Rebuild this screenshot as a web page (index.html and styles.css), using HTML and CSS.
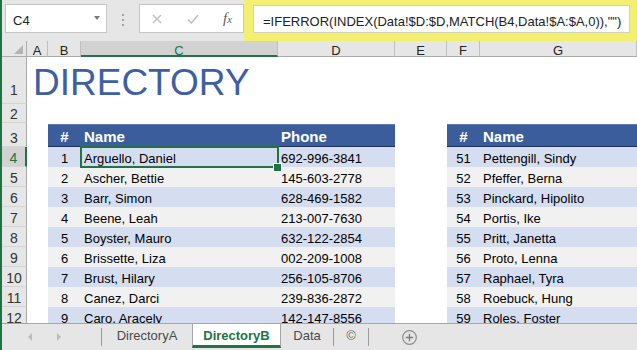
FILE: index.html
```html
<!DOCTYPE html>
<html lang="en">
<head>
  <meta charset="UTF-8">
  <title>Directory</title>
  <link rel="stylesheet" href="styles.css">
</head>
<body>
  <div class="window">
    <div class="formula-bar">
      <div class="name-box"><span>C4</span><i class="dropdown"></i></div>
      <div class="grip"><i></i><i></i><i></i></div>
      <div class="fx-box">
        <svg class="cancel" width="10" height="10" viewBox="0 0 10 10"><path d="M1 1L9 9M9 1L1 9" stroke="#bdbdbd" stroke-width="1.3" fill="none"/></svg>
        <svg class="enter" width="12" height="10" viewBox="0 0 12 10"><path d="M1 5.5L4.5 9L11 1" stroke="#bdbdbd" stroke-width="1.5" fill="none"/></svg>
        <span class="fx">f<span>x</span></span>
      </div>
      <div class="highlight">
        <div class="formula">=IFERROR(INDEX(Data!$D:$D,MATCH(B4,Data!$A:$A,0)),"")</div>
      </div>
    </div>

    <div class="sheet">
      <div class="row">
        <div class="corner"><i></i></div>
        <div class="ch">A</div><div class="ch">B</div><div class="ch active">C</div><div class="ch">D</div>
        <div class="ch">E</div><div class="ch">F</div><div class="ch">G</div>
      </div>
      <div class="row r1"><div class="rh">1</div><div class="title">DIRECTORY</div></div>
      <div class="row"><div class="rh">2</div><div class="wide"></div></div>
      <div class="row th">
        <div class="rh">3</div><div></div>
        <div class="cell num">#</div><div class="cell">Name</div><div class="cell">Phone</div>
        <div></div>
        <div class="cell num">#</div><div class="cell">Name</div>
      </div>
      <div class="row odd">
        <div class="rh active">4</div><div></div>
        <div class="cell num">1</div><div class="cell sel">Arguello, Daniel</div><div class="cell">692-996-3841</div>
        <div></div>
        <div class="cell num">51</div><div class="cell">Pettengill, Sindy</div>
      </div>
      <div class="row even">
        <div class="rh">5</div><div></div>
        <div class="cell num">2</div><div class="cell">Ascher, Bettie</div><div class="cell">145-603-2778</div>
        <div></div>
        <div class="cell num">52</div><div class="cell">Pfeffer, Berna</div>
      </div>
      <div class="row odd">
        <div class="rh">6</div><div></div>
        <div class="cell num">3</div><div class="cell">Barr, Simon</div><div class="cell">628-469-1582</div>
        <div></div>
        <div class="cell num">53</div><div class="cell">Pinckard, Hipolito</div>
      </div>
      <div class="row even">
        <div class="rh">7</div><div></div>
        <div class="cell num">4</div><div class="cell">Beene, Leah</div><div class="cell">213-007-7630</div>
        <div></div>
        <div class="cell num">54</div><div class="cell">Portis, Ike</div>
      </div>
      <div class="row odd">
        <div class="rh">8</div><div></div>
        <div class="cell num">5</div><div class="cell">Boyster, Mauro</div><div class="cell">632-122-2854</div>
        <div></div>
        <div class="cell num">55</div><div class="cell">Pritt, Janetta</div>
      </div>
      <div class="row even">
        <div class="rh">9</div><div></div>
        <div class="cell num">6</div><div class="cell">Brissette, Liza</div><div class="cell">002-209-1008</div>
        <div></div>
        <div class="cell num">56</div><div class="cell">Proto, Lenna</div>
      </div>
      <div class="row odd">
        <div class="rh">10</div><div></div>
        <div class="cell num">7</div><div class="cell">Brust, Hilary</div><div class="cell">256-105-8706</div>
        <div></div>
        <div class="cell num">57</div><div class="cell">Raphael, Tyra</div>
      </div>
      <div class="row even">
        <div class="rh">11</div><div></div>
        <div class="cell num">8</div><div class="cell">Canez, Darci</div><div class="cell">239-836-2872</div>
        <div></div>
        <div class="cell num">58</div><div class="cell">Roebuck, Hung</div>
      </div>
      <div class="row odd">
        <div class="rh">12</div><div></div>
        <div class="cell num">9</div><div class="cell">Caro, Aracely</div><div class="cell">142-147-8556</div>
        <div></div>
        <div class="cell num">59</div><div class="cell">Roles, Foster</div>
      </div>
    </div>

    <div class="tabs">
      <div class="nav"><i class="prev"></i><i class="next"></i></div>
      <i class="sep"></i>
      <div class="tab tab-a">DirectoryA</div>
      <div class="tab current">DirectoryB</div>
      <div class="tab tab-data">Data</div>
      <i class="sep"></i>
      <div class="tab tab-c">©</div>
      <i class="sep"></i>
      <svg class="add" width="15" height="15" viewBox="0 0 15 15"><circle cx="7.5" cy="7.5" r="6.8" stroke="#8c8c8c" stroke-width="1.2" fill="none"/><path d="M7.5 3.8V11.2M3.8 7.5H11.2" stroke="#7a7a7a" stroke-width="1.3"/></svg>
    </div>
  </div>
</body>
</html>
```

FILE: styles.css
```css
* {
  box-sizing: border-box;
}
body {
  margin: 0;
  font-family: "Liberation Sans", Arial, sans-serif;
  background: #fff;
}
.window {
  width: 637px;
  height: 350px;
  border-left: 2px solid #217346;
  overflow: hidden;
  display: flex;
  flex-direction: column;
}

/* formula bar */
.formula-bar {
  flex: none;
  height: 41px;
  display: flex;
  background: #e6e6e6;
}
.name-box {
  margin: 4px 0 0 3px;
  width: 102px;
  height: 29px;
  background: #fff;
  border: 1px solid #c6c6c6;
  display: flex;
  padding: 8px 0 0 7px;
  font-size: 13px;
  line-height: 15px;
  color: #222;
}
.dropdown {
  margin: 3px 6px 0 auto;
  width: 0;
  height: 0;
  border-left: 3px solid transparent;
  border-right: 3px solid transparent;
  border-top: 4px solid #7a7a7a;
}
.grip {
  width: 32px;
  display: flex;
  flex-direction: column;
  align-items: center;
  gap: 3px;
  padding-top: 14px;
}
.grip i {
  width: 2px;
  height: 2px;
  background: #a3a3a3;
}
.fx-box {
  margin-top: 4px;
  width: 105px;
  height: 29px;
  background: #fff;
  border: 1px solid #c6c6c6;
  display: flex;
  align-items: center;
  padding-left: 12px;
}
.enter {
  margin-left: 25px;
}
.fx {
  margin-left: 24px;
  font-family: "Liberation Serif", serif;
  font-style: italic;
  font-size: 15px;
  color: #5f5f5f;
}
.fx span {
  font-size: 11px;
}
.highlight {
  flex: 1;
  background: #f3ef70;
  padding: 5px 7px 0 9px;
}
.formula {
  height: 28px;
  background: #fff;
  border: 1px solid #d4d4b0;
  padding: 8px 0 0 9px;
  font-size: 13px;
  line-height: 15px;
  color: #222;
  white-space: nowrap;
}

/* grid */
.sheet {
  flex: none;
  height: 282px;
  overflow: hidden;
  display: grid;
  grid-template-columns: 25px 21px 33px 197px 117px 52px 33px 157px;
  grid-template-rows: 16px 47px 19px 24px repeat(9, 20px);
  font-size: 13px;
  color: #000;
}
.row {
  display: contents;
}
.corner {
  background: #e6e6e6;
  border-right: 1px solid #ababab;
  border-bottom: 1px solid #ababab;
  display: flex;
  justify-content: flex-end;
  align-items: flex-end;
  padding: 0 3px 2px 0;
}
.corner i {
  width: 0;
  height: 0;
  border-left: 9px solid transparent;
  border-bottom: 9px solid #b4b4b4;
}
.ch {
  background: #e6e6e6;
  border-right: 1px solid #c0c0c0;
  border-bottom: 1px solid #ababab;
  text-align: center;
  font-size: 13px;
  line-height: 13px;
  padding-top: 3px;
  color: #222;
}
.ch.active {
  background: #d2d2d2;
  border-bottom: 2px solid #217346;
  color: #217346;
}
.rh {
  background: #e6e6e6;
  border-right: 1px solid #ababab;
  border-bottom: 1px solid #d4d4d4;
  display: flex;
  justify-content: center;
  align-items: flex-end;
  font-size: 14px;
  line-height: 16px;
  color: #333;
}
.r1 .rh {
  padding-bottom: 5px;
}
.rh.active {
  background: #d2d2d2;
  border-right: 2px solid #217346;
  color: #217346;
}
.title {
  grid-column: 2 / -1;
  display: flex;
  align-items: flex-end;
  padding: 0 0 3px 6px;
  font-size: 37px;
  line-height: 37px;
  color: #3e60a3;
}
.wide {
  grid-column: 2 / -1;
}
.cell {
  display: flex;
  align-items: flex-end;
  padding: 0 0 1px 3px;
  line-height: 15px;
  white-space: nowrap;
}
.cell.num {
  justify-content: center;
  padding-left: 0;
}
.th .cell {
  margin-top: 1px;
  background: #3c5d9c;
  border-top: 1px solid #5b79b2;
  border-bottom: 1px solid #1f3158;
  color: #fff;
  font-weight: bold;
  font-size: 15px;
  line-height: 17px;
  padding-bottom: 1px;
}
.odd .cell {
  background: #d5def0;
}
.even .cell {
  background: #f1f1f1;
}
.cell.sel {
  position: relative;
  z-index: 1;
  outline: 2px solid #217346;
  outline-offset: -1px;
}
.cell.sel::after {
  content: "";
  position: absolute;
  right: -4px;
  bottom: -5px;
  width: 7px;
  height: 7px;
  background: #217346;
  border: 1px solid #fff;
}

/* sheet tabs */
.tabs {
  flex: none;
  height: 27px;
  display: flex;
  align-items: center;
  background: #e6e6e6;
  border-top: 1px solid #a6a6a6;
  font-size: 13px;
  color: #4a4a4a;
}
.nav {
  width: 99px;
  display: flex;
  align-items: center;
  padding-left: 26px;
}
.nav i {
  width: 0;
  height: 0;
  border-top: 4px solid transparent;
  border-bottom: 4px solid transparent;
}
.prev {
  border-right: 4px solid #bcbcbc;
}
.next {
  margin-left: 25px;
  border-left: 4px solid #bcbcbc;
}
.sep {
  width: 1px;
  height: 18px;
  background: #9c9c9c;
}
.tab {
  align-self: stretch;
  display: flex;
  justify-content: center;
  padding-top: 4px;
  line-height: 15px;
}
.tab-a {
  width: 90px;
}
.tab.current {
  width: 89px;
  background: #fff;
  border-left: 1px solid #a6a6a6;
  border-right: 1px solid #a6a6a6;
  border-bottom: 3px solid #217346;
  margin-bottom: 2px;
  color: #217346;
  font-weight: bold;
}
.tab-data {
  width: 52px;
}
.tab-c {
  width: 34px;
  color: #666;
}
.add {
  margin-left: 33px;
}
```
